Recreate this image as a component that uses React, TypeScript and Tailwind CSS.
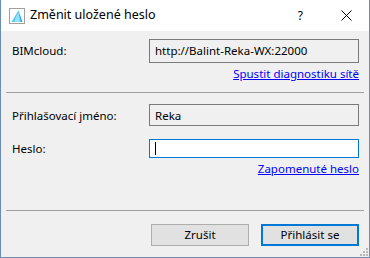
import React from "react";

function AppIcon() {
  return (
    <svg width="16" height="16" viewBox="0 0 16 16" className="shrink-0">
      <defs>
        <linearGradient id="fin" x1="0" y1="0" x2="1" y2="0">
          <stop offset="0" stopColor="#5fd3f5" />
          <stop offset="1" stopColor="#1aa0e6" />
        </linearGradient>
      </defs>
      <rect x="0.5" y="0.5" width="15" height="15" fill="#ffffff" stroke="#a0a0a0" />
      <path d="M2.5 14 L9.5 2.5 L13.5 14 Z" fill="url(#fin)" />
      <path d="M5.5 14 C6.5 9 8 6 9.5 4 C10 7 11 11 11.5 14 Z" fill="#bfefff" opacity="0.7" />
    </svg>
  );
}

export default function App() {
  return (
    <div className="flex h-[258px] w-[370px] flex-col border-x border-b border-[#6b8db3] bg-[#f0f0f0] font-['Noto_Sans',sans-serif] text-[11.5px] text-black">
      <div className="flex h-[31px] items-center bg-white pl-[8px]">
        <AppIcon />
        <span className="ml-[5px] text-[12.5px] text-black">Změnit uložené heslo</span>
        <span className="ml-auto mr-[38px] text-[12px]">?</span>
        <svg width="11" height="11" viewBox="0 0 11 11" className="mr-[17px]">
          <path d="M0.5 0.5 L10.5 10.5 M10.5 0.5 L0.5 10.5" stroke="#000" strokeWidth="1" />
        </svg>
      </div>

      <div className="flex flex-col pl-[11px] pr-[10px] pt-[8px]">
        <div className="flex h-[24px] items-center">
          <span className="w-[137px]">BIMcloud:</span>
          <div className="flex h-[24px] flex-1 items-center border border-[#7a7a7a] bg-[#f0f0f0] px-[5px]">
            http://Balint-Reka-WX:22000
          </div>
        </div>
        <div className="mt-[2px] flex justify-end">
          <span className="text-[#0000ff] underline">Spustit diagnostiku sítě</span>
        </div>
      </div>

      <div className="ml-[5px] mr-[5px] mt-[10px] h-px bg-[#a0a0a0]" />

      <div className="flex flex-col pl-[11px] pr-[10px] pt-[11px]">
        <div className="flex h-[22px] items-center">
          <span className="w-[137px]">Přihlašovací jméno:</span>
          <div className="flex h-[22px] flex-1 items-center border border-[#7a7a7a] bg-[#f0f0f0] px-[5px]">
            Reka
          </div>
        </div>
        <div className="mt-[13px] flex h-[19px] items-center">
          <span className="w-[137px]">Heslo:</span>
          <div className="flex h-[19px] flex-1 items-center border border-[#0078d7] bg-white px-[5px]">
            <div className="h-[13px] w-px bg-black" />
          </div>
        </div>
        <div className="mt-[2px] flex justify-end">
          <span className="text-[#0000ff] underline">Zapomenuté heslo</span>
        </div>
      </div>

      <div className="ml-[5px] mr-[5px] mt-[32px] h-px bg-[#a0a0a0]" />

      <div className="relative flex flex-1 justify-end gap-[12px] pr-[10px] pt-[13px]">
        <button className="h-[22px] w-[98px] border border-[#adadad] bg-[#e1e1e1] text-[11.5px]">Zrušit</button>
        <button className="h-[22px] w-[98px] border-2 border-[#0078d7] bg-[#e1e1e1] text-[11.5px]">Přihlásit se</button>
        <svg width="8" height="8" viewBox="0 0 8 8" className="absolute bottom-[1px] right-[1px]">
          <g fill="#b8b8b8">
            <rect x="6" y="0" width="2" height="2" />
            <rect x="3" y="3" width="2" height="2" />
            <rect x="6" y="3" width="2" height="2" />
            <rect x="0" y="6" width="2" height="2" />
            <rect x="3" y="6" width="2" height="2" />
            <rect x="6" y="6" width="2" height="2" />
          </g>
        </svg>
      </div>
    </div>
  );
}
